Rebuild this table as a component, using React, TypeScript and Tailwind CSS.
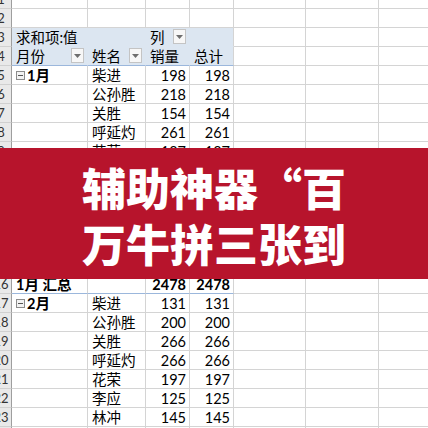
import React from "react";

type Row = {
  n: number;
  a?: string;
  b?: string;
  c?: string;
  d?: string;
  kind?: "head1" | "head2" | "group" | "total";
};

const rows: Row[] = [
  { n: 1 },
  { n: 2 },
  { n: 3, a: "求和项:值", c: "列", kind: "head1" },
  { n: 4, a: "月份", b: "姓名", c: "销量", d: "总计", kind: "head2" },
  { n: 5, a: "1月", b: "柴进", c: "198", d: "198", kind: "group" },
  { n: 6, b: "公孙胜", c: "218", d: "218" },
  { n: 7, b: "关胜", c: "154", d: "154" },
  { n: 8, b: "呼延灼", c: "261", d: "261" },
  { n: 9, b: "花荣", c: "187", d: "187" },
  { n: 10, b: "李应", c: "233", d: "233" },
  { n: 11, b: "林冲", c: "276", d: "276" },
  { n: 12, b: "卢俊义", c: "215", d: "215" },
  { n: 13, b: "鲁智深", c: "179", d: "179" },
  { n: 14, b: "秦明", c: "284", d: "284" },
  { n: 15, b: "宋江", c: "273", d: "273" },
  { n: 16, a: "1月 汇总", c: "2478", d: "2478", kind: "total" },
  { n: 17, a: "2月", b: "柴进", c: "131", d: "131", kind: "group" },
  { n: 18, b: "公孙胜", c: "200", d: "200" },
  { n: 19, b: "关胜", c: "266", d: "266" },
  { n: 20, b: "呼延灼", c: "266", d: "266" },
  { n: 21, b: "花荣", c: "197", d: "197" },
  { n: 22, b: "李应", c: "125", d: "125" },
  { n: 23, b: "林冲", c: "145", d: "145" },
  { n: 24 },
];

function Drop() {
  return (
    <span className="ml-auto mr-[3px] mb-[2px] flex h-[15px] w-[13px] items-center justify-center border border-[#c4c4c4] bg-[#f7f7f7]">
      <svg width="7" height="4" viewBox="0 0 7 4">
        <path d="M0 0h7L3.5 4z" fill="#6e6e6e" />
      </svg>
    </span>
  );
}

function Minus() {
  return (
    <span className="mr-[2px] mb-[4px] flex h-[9px] w-[9px] items-center justify-center border border-[#8c8c8c] bg-[#f2f2f2]">
      <span className="h-[1px] w-[5px] bg-[#555]" />
    </span>
  );
}

function SheetRow({ r }: { r: Row }) {
  const head = r.kind === "head1" || r.kind === "head2";
  const total = r.kind === "total";
  const bottom =
    r.kind === "head2" || total
      ? "border-b-[#9bb7dc]"
      : r.kind === "head1"
        ? "border-b-[#dce6f1]"
        : "border-b-[#d4d4d4]";
  const pivotBg = head ? "bg-[#dce6f1]" : "bg-white";
  const inner = head ? "border-r-[#dce6f1]" : "border-r-[#d4d4d4]";
  const weight = total ? "font-bold" : "";

  return (
    <div className={`flex h-[19px] ${total ? "border-t border-t-[#9bb7dc] h-[19px]" : ""}`}>
      <div className="relative w-[12px] shrink-0 overflow-hidden border-r border-r-[#9e9e9e] border-b border-b-[#d0d0d0] bg-[#e9e9e9]">
        <span className="absolute bottom-[1px] left-[-12px] w-[26px] text-center text-[13px] leading-[16px] text-[#333]">
          {r.n}
        </span>
      </div>
      <div className={`flex w-[76px] shrink-0 items-end border-r border-b pl-[4px] ${pivotBg} ${inner} ${bottom} ${weight}`}>
        {r.kind === "group" && <Minus />}
        <span className={`leading-[17px] ${r.kind === "group" ? "font-bold" : ""}`}>{r.a}</span>
        {r.kind === "head2" && <Drop />}
      </div>
      <div className={`flex w-[58px] shrink-0 items-end border-r border-b pl-[4px] ${pivotBg} ${inner} ${bottom}`}>
        <span className="leading-[17px]">{r.b}</span>
        {r.kind === "head2" && <Drop />}
      </div>
      <div
        className={`flex w-[44px] shrink-0 items-end border-r border-b ${pivotBg} ${inner} ${bottom} ${weight} ${
          head ? "justify-start pl-[4px]" : "justify-end pr-[3px]"
        }`}
      >
        <span className="leading-[17px]">{r.c}</span>
        {r.kind === "head1" && <Drop />}
      </div>
      <div
        className={`flex w-[44px] shrink-0 items-end border-r border-b border-r-[#d4d4d4] ${pivotBg} ${bottom} ${weight} ${
          head ? "justify-start pl-[4px]" : "justify-end pr-[3px]"
        }`}
      >
        <span className="leading-[17px]">{r.d}</span>
      </div>
      <div className="w-[72px] shrink-0 border-r border-b border-r-[#d4d4d4] border-b-[#d4d4d4]" />
      <div className="w-[73px] shrink-0 border-r border-b border-r-[#d4d4d4] border-b-[#d4d4d4]" />
      <div className="w-[73px] shrink-0 border-r border-b border-r-[#d4d4d4] border-b-[#d4d4d4]" />
    </div>
  );
}

export default function App() {
  return (
    <div className="relative h-[428px] w-[428px] overflow-hidden bg-white text-[14.5px] text-black [font-family:Lato,'Noto_Sans_CJK_SC',sans-serif]">
      <div className="mt-[-10px]">
        {rows.map((r) => (
          <SheetRow key={r.n} r={r} />
        ))}
      </div>

      <div className="absolute left-0 right-0 top-[148px] flex h-[131px] flex-col items-center justify-center bg-[#b7142c] pt-[3px] text-[44px] font-black leading-[56px] text-white [font-family:'Noto_Sans_CJK_SC',sans-serif]">
        <div>辅助神器“百</div>
        <div>万牛拼三张到</div>
      </div>
    </div>
  );
}
